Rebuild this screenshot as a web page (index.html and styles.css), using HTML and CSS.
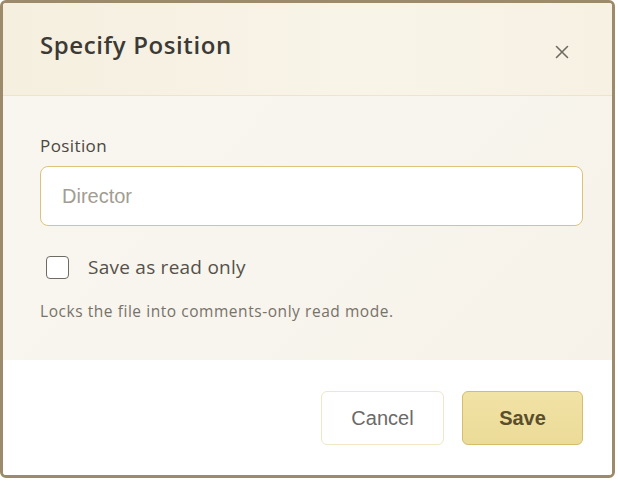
FILE: index.html
```html
<!DOCTYPE html>
<html lang="en">
<head>
<meta charset="utf-8">
<title>Specify Position</title>
<link rel="stylesheet" href="styles.css">
</head>
<body>
<div class="dialog">
  <header class="dialog-header">
    <h1 class="dialog-title">Specify Position</h1>
    <button class="close-btn" aria-label="Close">
      <svg width="14" height="14" viewBox="0 0 14 14"><path d="M1.5 1.5 L12.5 12.5 M12.5 1.5 L1.5 12.5" stroke="#6f6b63" stroke-width="1.6" stroke-linecap="round" fill="none"/></svg>
    </button>
  </header>
  <section class="dialog-body">
    <label class="field-label" for="pos">Position</label>
    <input id="pos" class="text-input" type="text" placeholder="Director">
    <label class="check-row">
      <span class="checkbox"></span>
      <span class="check-text">Save as read only</span>
    </label>
    <p class="hint">Locks the file into comments-only read mode.</p>
  </section>
  <footer class="dialog-footer">
    <button class="btn btn-cancel">Cancel</button>
    <button class="btn btn-save">Save</button>
  </footer>
</div>
</body>
</html>
```
FILE: styles.css
```css
html, body {
  margin: 0;
  padding: 0;
  background: #ffffff;
}
.dialog {
  width: 615px;
  height: 478px;
  box-sizing: border-box;
  border: 3px solid #9d8a6b;
  border-radius: 6px;
  display: flex;
  flex-direction: column;
  overflow: hidden;
  font-family: "Open Sans", "Noto Sans", sans-serif;
}
.dialog-header {
  height: 93px;
  box-sizing: border-box;
  border-bottom: 1px solid #eee4cb;
  background: linear-gradient(90deg, #f5efdf 0%, #f8f4e8 60%, #f6f1e3 100%);
  display: flex;
  align-items: flex-start;
  justify-content: space-between;
  padding: 26px 43px 0 37px;
}
.dialog-title {
  margin: 0;
  font-size: 24px;
  line-height: 32px;
  font-weight: 600;
  color: #3c3a35;
  letter-spacing: 0.6px;
}
.close-btn {
  border: none;
  background: transparent;
  padding: 0;
  width: 14px;
  height: 14px;
  display: flex;
  margin-top: 16px;
}
.dialog-body {
  height: 264px;
  box-sizing: border-box;
  background: linear-gradient(135deg, #f9f6ef 0%, #f8f5ee 50%, #f6f2e9 100%);
  padding: 39px 29px 0 37px;
  display: flex;
  flex-direction: column;
}
.field-label {
  font-size: 17px;
  line-height: 22px;
  color: #4b4741;
  letter-spacing: 0.4px;
}
.text-input {
  margin-top: 9px;
  height: 60px;
  box-sizing: border-box;
  border: 1.5px solid #dcc37c;
  border-radius: 8px;
  background: #ffffff;
  padding: 0 21px;
  font-family: "Liberation Sans", Arial, sans-serif;
  font-size: 20px;
  color: #3c3a35;
  outline: none;
}
.text-input::placeholder {
  color: #a29d93;
}
.check-row {
  margin-top: 28px;
  display: flex;
  align-items: center;
  padding-left: 6px;
}
.checkbox {
  width: 23px;
  height: 23px;
  box-sizing: border-box;
  border: 1.5px solid #6f6b64;
  border-radius: 4px;
  background: #ffffff;
}
.check-text {
  margin-left: 19px;
  font-size: 19px;
  line-height: 26px;
  letter-spacing: 0.25px;
  color: #55514a;
}
.hint {
  margin: 21px 0 0;
  font-size: 15.5px;
  line-height: 21px;
  letter-spacing: 0.55px;
  color: #77726a;
}
.dialog-footer {
  flex: 1;
  background: #ffffff;
  display: flex;
  justify-content: flex-end;
  align-items: flex-start;
  gap: 18px;
  padding: 31px 29px 0 0;
}
.btn {
  height: 54px;
  box-sizing: border-box;
  border-radius: 6px;
  font-family: "Liberation Sans", Arial, sans-serif;
  font-size: 20px;
  cursor: pointer;
}
.btn-cancel {
  width: 123px;
  background: #ffffff;
  border: 1px solid #f0e7c8;
  color: #6b6a68;
}
.btn-save {
  width: 121px;
  background: linear-gradient(180deg, #f1e3a6 0%, #ecdb98 100%);
  border: 1px solid #d6bd6a;
  color: #5a4e2c;
  font-weight: 700;
}
```
